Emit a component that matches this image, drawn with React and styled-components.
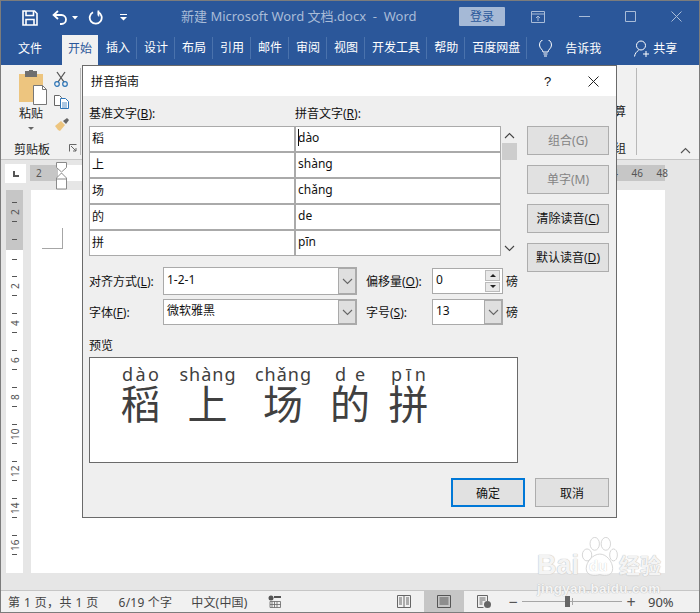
import styled, { createGlobalStyle } from "styled-components";

const GlobalStyle = createGlobalStyle`
  html, body {
    margin: 0;
    padding: 0;
    background: #e6e6e6;
  }
  * {
    box-sizing: border-box;
  }
`;

const FONT = `"Noto Sans", "Noto Sans CJK SC", sans-serif`;

const TABS = ["插入", "设计", "布局", "引用", "邮件", "审阅", "视图", "开发工具", "帮助", "百度网盘"];

const RULER_GROUPS = ["2", "4", "6", "8", "10", "12", "14", "16"];

const READINGS = [
  { base: "稻", reading: "dào" },
  { base: "上", reading: "shàng" },
  { base: "场", reading: "chǎng" },
  { base: "的", reading: "de" },
  { base: "拼", reading: "pīn" },
];

const PREVIEW = [
  { base: "稻", reading: "dào", width: 39, spacing: 2.4 },
  { base: "上", reading: "shàng", width: 56, spacing: 1 },
  { base: "场", reading: "chǎng", width: 56, spacing: 1 },
  { base: "的", reading: "de", width: 39, spacing: 9 },
  { base: "拼", reading: "pīn", width: 39, spacing: 4 },
];

const Chevron = ({ up }) => (
  <svg width="11" height="7" viewBox="0 0 11 7">
    <polyline
      points={up ? "1,6 5.5,1.5 10,6" : "1,1 5.5,5.5 10,1"}
      fill="none"
      stroke="currentColor"
      strokeWidth="1.1"
    />
  </svg>
);

const App = () => (
  <Window>
    <GlobalStyle />
    <TitleBar>
      <TitleIcon $left={21}>
        <svg width="16" height="16" viewBox="0 0 16 16" fill="none" stroke="#fff" strokeWidth="1.6">
          <path d="M1 1h11.5L15 3.5V15H1z" />
          <path d="M4 1v4.5h7.5V1" />
          <path d="M4 15V9.5h8V15" />
        </svg>
      </TitleIcon>
      <TitleIcon $left={14}>
        <svg width="16" height="15" viewBox="0 0 16 15" fill="none" stroke="#fff" strokeWidth="1.8">
          <path d="M6 1 1.6 5 6 9" />
          <path d="M2 5h7.5a4.5 4.5 0 0 1 0 9H8" />
        </svg>
      </TitleIcon>
      <TitleIcon $left={4}>
        <svg width="6" height="4" viewBox="0 0 6 4">
          <path d="M0 0h6L3 3.5z" fill="#fff" />
        </svg>
      </TitleIcon>
      <TitleIcon $left={10}>
        <svg width="15" height="15" viewBox="0 0 15 15" fill="none" stroke="#fff" strokeWidth="1.8">
          <path d="M5 2.3a6 6 0 1 0 5-.2" />
          <path d="M10.4 0.5v5h-0.2" />
        </svg>
      </TitleIcon>
      <TitleIcon $left={17}>
        <svg width="7" height="7" viewBox="0 0 7 7">
          <path d="M0 0h7v1H0zM0 3h7L3.5 6.5z" fill="#fff" />
        </svg>
      </TitleIcon>
      <DocName>{"新建 Microsoft Word 文档.docx  -  Word"}</DocName>
      <LoginButton>登录</LoginButton>
      <WindowIcon $left={26}>
        <svg width="14" height="12" viewBox="0 0 14 12" fill="none" stroke="currentColor">
          <path d="M.5.5h13v11H.5zM.5 3h13M7 10V5M5 7l2-2 2 2" />
        </svg>
      </WindowIcon>
      <WindowIcon $left={34}>
        <svg width="11" height="11" viewBox="0 0 11 11" stroke="currentColor">
          <path d="M0 5.5h11" />
        </svg>
      </WindowIcon>
      <WindowIcon $left={35}>
        <svg width="11" height="11" viewBox="0 0 11 11" fill="none" stroke="currentColor">
          <path d="M.5.5h10v10H.5z" />
        </svg>
      </WindowIcon>
      <WindowIcon $left={35}>
        <svg width="11" height="11" viewBox="0 0 11 11" stroke="currentColor">
          <path d="M.5.5l10 10M10.5.5l-10 10" />
        </svg>
      </WindowIcon>
    </TitleBar>

    <TabBar>
      <FileTab>文件</FileTab>
      <ActiveTab>开始</ActiveTab>
      {TABS.map((tab) => (
        <Tab key={tab}>{tab}</Tab>
      ))}
      <TellIcon>
        <svg width="13" height="17" viewBox="0 0 13 17" fill="none" stroke="#fff" strokeWidth="1">
          <path d="M4 12c0-2.5-3.5-3.5-3.5-7a6 6 0 0 1 12 0c0 3.5-3.5 4.5-3.5 7z" />
          <path d="M4.5 14h4M5 16h3" />
        </svg>
      </TellIcon>
      <TellText>告诉我</TellText>
      <ShareIcon>
        <svg width="16" height="17" viewBox="0 0 16 17" fill="none" stroke="#fff" strokeWidth="1">
          <circle cx="7" cy="5.5" r="4.5" />
          <path d="M.5 16.5c.5-3 2-5 4-6M12 11v6M9 14h6" />
        </svg>
      </ShareIcon>
      <TabText>共享</TabText>
    </TabBar>

    <Ribbon>
      <ClipboardGroup>
        <ClipboardTools>
          <PasteColumn>
            <svg width="30" height="36" viewBox="0 0 30 36">
              <rect x="1" y="4" width="24" height="28" fill="#edc57f" />
              <rect x="7" y="1" width="12" height="6" fill="#6f6f6f" />
              <rect x="11" y="0" width="4" height="3" fill="#6f6f6f" />
              <path d="M15.5 15.5h9l4 4v15h-13z" fill="#fff" stroke="#777" />
              <path d="M24.5 15.5v4h4" fill="none" stroke="#777" />
            </svg>
            <PasteLabel>粘贴</PasteLabel>
            <PasteCaret />
          </PasteColumn>
          <SmallTools>
            <svg width="14" height="16" viewBox="0 0 14 16" fill="none">
              <path d="M3 1l7 10M11 1L4 11" stroke="#555" strokeWidth="1.3" />
              <circle cx="3" cy="13" r="2.3" stroke="#2e75b6" strokeWidth="1.2" />
              <circle cx="11" cy="13" r="2.3" stroke="#2e75b6" strokeWidth="1.2" />
            </svg>
            <svg width="15" height="14" viewBox="0 0 15 14" fill="#fff">
              <path d="M.5.5h5l2 2v8h-7z" stroke="#666" />
              <path d="M6.5 3.5h5l3 3v7h-8z" stroke="#2e75b6" />
              <path d="M8 8h5M8 10h5M8 12h5" stroke="#2e75b6" strokeWidth=".8" />
            </svg>
            <svg width="16" height="14" viewBox="0 0 16 14">
              <path d="M1 9l6-5 4 4-5 6-2-1z" fill="#edc57f" />
              <path d="M9 4l4-3 2 2-3 4z" fill="#666" />
            </svg>
          </SmallTools>
        </ClipboardTools>
        <GroupFooter>
          <GroupLabel>剪贴板</GroupLabel>
          <Launcher>
            <svg width="8" height="8" viewBox="0 0 8 8" fill="none" stroke="#666">
              <path d="M.5 7.5V.5h7M2 2l5 5M7 4v3H4" />
            </svg>
          </Launcher>
        </GroupFooter>
      </ClipboardGroup>
      <RibbonMiddle />
      <ClippedGroup>
        <span>算</span>
        <span>组</span>
      </ClippedGroup>
      <CollapseArea>
        <Chevron up />
      </CollapseArea>
    </Ribbon>

    <RulerRow>
      <RulerCorner>
        <CornerBox>
          <CornerMark />
        </CornerBox>
      </RulerCorner>
      <RulerLeftMargin>2</RulerLeftMargin>
      <RulerBody />
      <RulerRightMargin>
        <span>44</span>
        <span>46</span>
        <span>48</span>
      </RulerRightMargin>
      <IndentMarker>
        <svg width="11" height="28" viewBox="0 0 11 28" fill="#fff" stroke="#8a8a8a">
          <path d="M.5.5h10v5L5.5 10 .5 5.5z" />
          <path d="M5.5 11l5 5v11H.5V16z" />
          <path d="M.5 17h10" />
        </svg>
      </IndentMarker>
    </RulerRow>

    <Workspace>
      <VerticalRuler>
        <RulerMarginZone>
          <RulerGroup>
            <RulerTick />
            <RulerNumber>2</RulerNumber>
            <RulerTick />
          </RulerGroup>
          <RulerTick />
        </RulerMarginZone>
        <RulerTextZone>
          <RulerTick />
          <RulerGroups>
            {RULER_GROUPS.map((n) => (
              <RulerGroup key={n}>
                <RulerTick />
                <RulerNumber>{n}</RulerNumber>
                <RulerTick />
              </RulerGroup>
            ))}
          </RulerGroups>
        </RulerTextZone>
      </VerticalRuler>
      <Page>
        <CropMark />
      </Page>
    </Workspace>

    <PageGutter />

    <StatusBar>
      <StatusText $left={7} $wide>第 1 页，共 1 页</StatusText>
      <StatusText $left={20}>6/19 个字</StatusText>
      <StatusText $left={19}>中文(中国)</StatusText>
      <StatusIcon $left={20}>
        <svg width="13" height="13" viewBox="0 0 13 13">
          <circle cx="3" cy="3" r="2.5" fill="#555" />
          <path d="M6 1h7v2H6z" fill="#555" />
          <path d="M2 6.5h10.5v6H2zM4 6.5v6M6.5 6.5v6M9 6.5v6M2 9.5h10.5" fill="none" stroke="#666" strokeWidth=".8" />
        </svg>
      </StatusIcon>
      <ViewButtons>
        <ViewButton>
          <svg width="14" height="13" viewBox="0 0 14 13" fill="none" stroke="#666">
            <path d="M.5.5h13v12H.5zM7 .5v12M2 3h3M2 5h3M2 7h3M2 9h3M9 3h3M9 5h3M9 7h3M9 9h3" />
          </svg>
        </ViewButton>
        <ViewButton $active>
          <svg width="14" height="13" viewBox="0 0 14 13" fill="none" stroke="#555">
            <path d="M.5.5h13v12H.5zM2.5 3h9M2.5 5h9M2.5 7h9M2.5 9h9" />
          </svg>
        </ViewButton>
        <ViewButton>
          <svg width="14" height="13" viewBox="0 0 14 13" fill="none" stroke="#666">
            <path d="M10.5 6V.5H.5v12h6M2.5 3h6M2.5 5h6M2.5 7h3M2.5 9h3" />
            <circle cx="10.5" cy="9.5" r="3.5" fill="#666" stroke="none" />
          </svg>
        </ViewButton>
      </ViewButtons>
      <ZoomSlider>
        <ZoomSign>−</ZoomSign>
        <ZoomTrack>
          <ZoomCenter />
          <ZoomThumb />
        </ZoomTrack>
        <ZoomSign>+</ZoomSign>
      </ZoomSlider>
      <ZoomValue>90%</ZoomValue>
    </StatusBar>

    <Dialog>
      <DialogHeader>
        <DialogTitle>拼音指南</DialogTitle>
        <HelpMark>?</HelpMark>
        <CloseMark>
          <svg width="11" height="11" viewBox="0 0 11 11" stroke="#222" strokeWidth="1">
            <path d="M.5.5l10 10M10.5.5l-10 10" />
          </svg>
        </CloseMark>
      </DialogHeader>
      <DialogBody>
        <GuideSection>
          <GuideMain>
            <ColumnLabels>
              <span>
                基准文字(<u>B</u>):
              </span>
              <span>
                拼音文字(<u>R</u>):
              </span>
            </ColumnLabels>
            <TableWrap>
              <ReadingTable>
                {READINGS.map((row, index) => (
                  <ReadingRow key={row.base}>
                    <ReadingCell>{row.base}</ReadingCell>
                    <ReadingCell>
                      {index === 0 && <Caret />}
                      {row.reading}
                    </ReadingCell>
                  </ReadingRow>
                ))}
              </ReadingTable>
              <TableScroll>
                <ScrollArrow>
                  <Chevron up />
                </ScrollArrow>
                <ScrollThumb />
                <ScrollArrow $bottom>
                  <Chevron />
                </ScrollArrow>
              </TableScroll>
            </TableWrap>
          </GuideMain>
          <ActionColumn>
            <ActionButton disabled>组合(G)</ActionButton>
            <ActionButton disabled>单字(M)</ActionButton>
            <ActionButton>
              清除读音(<u>C</u>)
            </ActionButton>
            <ActionButton>
              默认读音(<u>D</u>)
            </ActionButton>
          </ActionColumn>
        </GuideSection>

        <OptionsGrid>
          <OptionLabel>
            对齐方式(<u>L</u>):
          </OptionLabel>
          <Combo $tall>
            <ComboValue $tall>1-2-1</ComboValue>
            <ComboArrow>
              <Chevron />
            </ComboArrow>
          </Combo>
          <OptionLabel $side>
            偏移量(<u>O</u>):
          </OptionLabel>
          <Spin>
            <ComboValue>0</ComboValue>
            <SpinButtons>
              <SpinButton>
                <SpinTriangle $up />
              </SpinButton>
              <SpinButton>
                <SpinTriangle />
              </SpinButton>
            </SpinButtons>
          </Spin>
          <UnitLabel>磅</UnitLabel>

          <OptionLabel>
            字体(<u>F</u>):
          </OptionLabel>
          <Combo>
            <ComboValue>微软雅黑</ComboValue>
            <ComboArrow>
              <Chevron />
            </ComboArrow>
          </Combo>
          <OptionLabel $side>
            字号(<u>S</u>):
          </OptionLabel>
          <Spin>
            <ComboValue>13</ComboValue>
            <ComboArrow>
              <Chevron />
            </ComboArrow>
          </Spin>
          <UnitLabel>磅</UnitLabel>
        </OptionsGrid>

        <PreviewLabel>预览</PreviewLabel>
        <PreviewBox>
          {PREVIEW.map((item) => (
            <PreviewItem key={item.base} $width={item.width}>
              <PreviewReading $spacing={item.spacing}>{item.reading}</PreviewReading>
              <PreviewBase>{item.base}</PreviewBase>
            </PreviewItem>
          ))}
        </PreviewBox>

        <DialogFooter>
          <FooterButton $primary>确定</FooterButton>
          <FooterButton>取消</FooterButton>
        </DialogFooter>
      </DialogBody>
    </Dialog>

    <Watermark>
      <WatermarkLogo>
        <WatermarkWord>Bai</WatermarkWord>
        <PawMark>
          <svg width="38" height="41" viewBox="0 0 44 48" fill="rgba(255,255,255,.75)" stroke="#cfcfcf">
            <ellipse cx="8" cy="21" rx="5.5" ry="7" />
            <ellipse cx="17" cy="8" rx="5.5" ry="7.5" />
            <ellipse cx="30" cy="8" rx="5.5" ry="7.5" />
            <ellipse cx="39" cy="21" rx="4.5" ry="7" />
            <path d="M23 20c8 0 15 9 15 17 0 8-8 9-15 7-7 2-16 1-16-7 0-8 8-17 16-17z" />
          </svg>
          <PawLabel>du</PawLabel>
        </PawMark>
        <WatermarkCjk>经验</WatermarkCjk>
      </WatermarkLogo>
      <WatermarkUrl>jingyan.baidu.com</WatermarkUrl>
    </Watermark>
  </Window>
);

export default App;

const Window = styled.div`
  position: relative;
  width: 700px;
  height: 613px;
  overflow: hidden;
  display: flex;
  flex-direction: column;
  border: 1px solid #7c7c7c;
  background: #e6e6e6;
  font-family: ${FONT};
  font-size: 12px;
  color: #222;
`;

const TitleBar = styled.div`
  height: 33px;
  flex: none;
  display: flex;
  align-items: center;
  background: #2b579a;
`;

const TitleIcon = styled.span`
  display: flex;
  margin-left: ${(p) => p.$left}px;
`;

const DocName = styled.span`
  margin: 0 0 5px 54px;
  width: 278px;
  font-size: 13px;
  white-space: pre;
  color: #a9bcd8;
`;

const LoginButton = styled.span`
  width: 46px;
  height: 19px;
  margin-bottom: 2px;
  display: flex;
  align-items: center;
  justify-content: center;
  padding-bottom: 1px;
  border-radius: 1px;
  background: #a5b9d6;
  color: #2b579a;
  font-size: 12px;
`;

const WindowIcon = styled.span`
  display: flex;
  margin-left: ${(p) => p.$left}px;
  margin-bottom: 2px;
  color: #a9bcd8;
`;

const TabBar = styled.div`
  height: 31px;
  flex: none;
  display: flex;
  align-items: center;
  padding: 0 0 3px 11px;
  background: #2b579a;
  color: #fff;
`;

const FileTab = styled.span`
  width: 36px;
  padding-left: 6px;
  margin-right: 14px;
`;

const ActiveTab = styled.span`
  align-self: stretch;
  width: 36px;
  margin: 1px 1px -3px 0;
  display: flex;
  align-items: center;
  justify-content: center;
  padding-bottom: 4px;
  background: #f1f1f1;
  color: #2b579a;
`;

const Tab = styled.span`
  height: 22px;
  line-height: 21px;
  padding: 0 6px 0 7px;
  border-right: 1px solid #4a72ac;
`;

const TellIcon = styled.span`
  display: flex;
  margin-left: 12px;
`;

const TellText = styled.span`
  margin-left: 13px;
`;

const ShareIcon = styled.span`
  display: flex;
  margin-left: 33px;
  margin-right: 3px;
`;

const TabText = styled.span``;

const Ribbon = styled.div`
  height: 95px;
  flex: none;
  display: flex;
  padding: 3px 0 4px;
  border-bottom: 1px solid #c6c6c6;
  background: #f1f1f1;
`;

const ClipboardGroup = styled.div`
  width: 80px;
  display: flex;
  flex-direction: column;
  border-right: 1px solid #b8b8b8;
`;

const ClipboardTools = styled.div`
  flex: 1;
  display: flex;
  padding: 2px 0 0 17px;
`;

const PasteColumn = styled.div`
  width: 36px;
  display: flex;
  flex-direction: column;
  align-items: flex-start;
`;

const PasteLabel = styled.span`
  width: 26px;
  margin-top: -1px;
  line-height: 17px;
  text-align: center;
`;

const PasteCaret = styled.i`
  margin: 5px 0 0 10px;
  border: 3px solid transparent;
  border-top: 3.5px solid #666;
  border-bottom: 0;
`;

const SmallTools = styled.div`
  display: flex;
  flex-direction: column;
  gap: 8px;
  align-items: flex-start;
  padding-top: 1px;
`;

const GroupFooter = styled.div`
  height: 22px;
  margin-bottom: -3px;
  display: flex;
  align-items: flex-end;
  padding-left: 13px;
`;

const GroupLabel = styled.span`
  flex: 1;
  line-height: 16px;
`;

const Launcher = styled.span`
  display: flex;
  margin: 0 3px 6px 0;
`;

const RibbonMiddle = styled.div`
  flex: 1;
`;

const ClippedGroup = styled.div`
  width: 23px;
  display: flex;
  flex-direction: column;
  gap: 19px;
  padding-top: 34px;
  border-right: 1px solid #b8b8b8;
`;

const CollapseArea = styled.div`
  width: 62px;
  display: flex;
  align-items: flex-end;
  justify-content: flex-end;
  padding: 0 8px 1px 0;
  color: #555;
`;

const RulerRow = styled.div`
  position: relative;
  height: 30px;
  flex: none;
  display: flex;
  align-items: flex-start;
  background: #e6e6e6;
`;

const RulerCorner = styled.div`
  width: 29px;
  height: 26px;
  padding: 4px 0 0 4px;
`;

const CornerBox = styled.div`
  width: 21px;
  height: 19px;
  display: flex;
  align-items: center;
  justify-content: center;
  background: #fff;
`;

const CornerMark = styled.i`
  width: 6px;
  height: 6px;
  border-left: 2px solid #555;
  border-bottom: 2px solid #555;
`;

const RulerLeftMargin = styled.div`
  width: 28px;
  height: 16px;
  margin-top: 5px;
  padding-left: 6px;
  line-height: 16px;
  font-size: 10px;
  color: #555;
  background: #c6c6c6;
`;

const RulerBody = styled.div`
  flex: 1;
  height: 16px;
  margin-top: 5px;
  background: #fff;
`;

const RulerRightMargin = styled.div`
  width: 70px;
  height: 16px;
  margin: 5px 34px 0 0;
  display: flex;
  justify-content: flex-end;
  gap: 13.6px;
  line-height: 16px;
  font-size: 10px;
  color: #555;
  background: #c6c6c6;

  span:last-child {
    margin-right: -3px;
  }
`;

const IndentMarker = styled.div`
  position: absolute;
  left: 55px;
  top: 2px;
  display: flex;
`;

const Workspace = styled.div`
  height: 383px;
  flex: none;
  display: flex;
  padding-left: 5px;
`;

const VerticalRuler = styled.div`
  width: 17px;
  overflow: hidden;
  margin-right: 8px;
  display: flex;
  flex-direction: column;
  background: #fff;
`;

const RulerMarginZone = styled.div`
  height: 60px;
  flex: none;
  display: flex;
  flex-direction: column;
  align-items: center;
  padding-top: 12px;
  background: #c6c6c6;
`;

const RulerTextZone = styled.div`
  display: flex;
  flex-direction: column;
  align-items: center;
  padding-top: 9px;
`;

const RulerGroups = styled.div`
  margin-top: 16px;
`;

const RulerGroup = styled.div`
  height: 37px;
  display: flex;
  flex-direction: column;
  align-items: center;
`;

const RulerTick = styled.i`
  width: 5px;
  height: 1px;
  flex: none;
  background: #555;
`;

const RulerNumber = styled.span`
  height: 18px;
  display: flex;
  align-items: center;
  justify-content: center;
  writing-mode: vertical-rl;
  transform: rotate(180deg);
  font-size: 10px;
  line-height: 10px;
  color: #555;
`;

const Page = styled.div`
  width: 634px;
  padding: 38px 0 0 11px;
  background: #fff;
`;

const CropMark = styled.div`
  width: 21px;
  height: 21px;
  border-right: 1px solid #a6a6a6;
  border-bottom: 1px solid #a6a6a6;
`;

const PageGutter = styled.div`
  height: 17px;
  flex: none;
`;

const StatusBar = styled.div`
  height: 22px;
  flex: none;
  display: flex;
  align-items: center;
  border-top: 1px solid #c6c6c6;
  background: #f1f1f1;
  color: #444;
`;

const StatusText = styled.span`
  margin-left: ${(p) => p.$left}px;
  letter-spacing: ${(p) => (p.$wide ? "0.4px" : "0.2px")};
`;

const StatusIcon = styled.span`
  display: flex;
  margin-left: ${(p) => p.$left}px;
`;

const ViewButtons = styled.div`
  align-self: stretch;
  margin-left: auto;
  display: flex;
`;

const ViewButton = styled.span`
  width: 40px;
  display: flex;
  align-items: center;
  justify-content: center;
  background: ${(p) => (p.$active ? "#c6c6c6" : "transparent")};
`;

const ZoomSlider = styled.div`
  display: flex;
  align-items: center;
  margin-left: 1px;
`;

const ZoomSign = styled.span`
  width: 16px;
  text-align: center;
  font-size: 16px;
  line-height: 16px;
  color: #555;
`;

const ZoomTrack = styled.div`
  position: relative;
  width: 100px;
  height: 1px;
  margin: 0 1px;
  background: #a6a6a6;
`;

const ZoomCenter = styled.i`
  position: absolute;
  left: 50px;
  top: -3px;
  width: 1px;
  height: 7px;
  background: #a6a6a6;
`;

const ZoomThumb = styled.i`
  position: absolute;
  left: 43px;
  top: -5px;
  width: 5px;
  height: 11px;
  background: #666;
`;

const ZoomValue = styled.span`
  width: 60px;
  padding-left: 9px;
  font-size: 13px;
`;

const Dialog = styled.div`
  position: absolute;
  left: 81px;
  top: 64px;
  width: 535px;
  height: 453px;
  display: flex;
  flex-direction: column;
  border: 1px solid #6a6a6a;
  background: #efefef;
  color: #111;
`;

const DialogHeader = styled.div`
  height: 30px;
  flex: none;
  display: flex;
  align-items: center;
  padding-left: 8px;
  background: #fff;
`;

const DialogTitle = styled.span`
  flex: 1;
`;

const HelpMark = styled.span`
  width: 48px;
  padding-left: 4px;
  font-size: 13px;
  font-family: "Liberation Sans", sans-serif;
`;

const CloseMark = styled.span`
  display: flex;
  width: 28px;
`;

const DialogBody = styled.div`
  flex: 1;
  display: flex;
  flex-direction: column;
  padding: 10px 7px 0 6px;
`;

const GuideSection = styled.div`
  display: flex;
  justify-content: space-between;
`;

const GuideMain = styled.div`
  width: 428px;
`;

const ColumnLabels = styled.div`
  height: 20px;
  display: grid;
  grid-template-columns: 206px 206px;
  line-height: 16px;
`;

const TableWrap = styled.div`
  display: flex;
`;

const ReadingTable = styled.div`
  width: 412px;
  display: flex;
  flex-direction: column;
`;

const ReadingRow = styled.div`
  height: 26px;
  display: grid;
  grid-template-columns: 206px 206px;
`;

const ReadingCell = styled.div`
  position: relative;
  display: flex;
  align-items: center;
  padding: 0 0 3px 2px;
  border: 1px solid #aaa;
  background: #fff;
  font-size: 12px;
`;

const Caret = styled.i`
  position: absolute;
  left: 2px;
  top: 2px;
  width: 1px;
  height: 17px;
  background: #111;
`;

const TableScroll = styled.div`
  position: relative;
  width: 16px;
  display: flex;
  flex-direction: column;
  align-items: center;
`;

const ScrollArrow = styled.span`
  display: flex;
  position: absolute;
  ${(p) => (p.$bottom ? "bottom: 4px;" : "top: 6px;")}
  color: #444;
`;

const ScrollThumb = styled.div`
  position: absolute;
  top: 17px;
  left: 1px;
  width: 15px;
  height: 17px;
  background: #cdcdcd;
`;

const ActionColumn = styled.div`
  width: 82px;
  display: flex;
  flex-direction: column;
  gap: 10px;
  padding-top: 20px;
`;

const ActionButton = styled.button`
  height: 29px;
  padding: 0 0 2px;
  border: 1px solid #adadad;
  background: #e1e1e1;
  font-family: inherit;
  font-size: 12px;
  color: #111;

  &:disabled {
    color: #848484;
  }
`;

const OptionsGrid = styled.div`
  margin-top: -5px;
  display: grid;
  grid-template-columns: 74px 194px 75px 71px auto;
  grid-template-rows: 28px 26px;
  row-gap: 4px;
  align-items: center;
`;

const OptionLabel = styled.span`
  padding-left: ${(p) => (p.$side ? "9px" : "0")};
`;

const Combo = styled.div`
  height: ${(p) => (p.$tall ? "28px" : "26px")};
  display: flex;
  border: 1px solid #aaa;
  background: #fff;
`;

const ComboValue = styled.span`
  flex: 1;
  padding-left: 3px;
  line-height: ${(p) => (p.$tall ? "24px" : "22px")};
`;

const ComboArrow = styled.span`
  width: 18px;
  display: flex;
  align-items: center;
  justify-content: center;
  border: 1px solid #aaa;
  background: #dfdfdf;
  color: #666;
`;

const Spin = styled.div`
  height: 26px;
  display: flex;
  border: 1px solid #aaa;
  background: #fff;
`;

const SpinButtons = styled.div`
  width: 15px;
  margin: 1px 2px;
  display: flex;
  flex-direction: column;
  gap: 1px;
`;

const SpinButton = styled.span`
  flex: 1;
  display: flex;
  align-items: center;
  justify-content: center;
  border: 1px solid #bbb;
  background: #e8e8e8;
`;

const SpinTriangle = styled.i`
  border: 3px solid transparent;
  ${(p) => (p.$up ? "border-bottom: 3px solid #222; border-top: 0;" : "border-top: 3px solid #222; border-bottom: 0;")}
`;

const UnitLabel = styled.span`
  padding-left: 3px;
`;

const PreviewLabel = styled.div`
  margin-top: 13px;
  height: 19px;
  line-height: 16px;
`;

const PreviewBox = styled.div`
  width: 429px;
  height: 106px;
  display: flex;
  gap: 19.5px;
  padding: 5px 0 0 31px;
  border: 1px solid #6a6a6a;
  background: #fff;
  color: #404040;
`;

const PreviewItem = styled.div`
  width: ${(p) => p.$width}px;
  height: 60px;
  display: flex;
  flex-direction: column;
  align-items: center;
`;

const PreviewReading = styled.span`
  height: 22px;
  line-height: 22px;
  white-space: nowrap;
  font-size: 18px;
  letter-spacing: ${(p) => p.$spacing}px;
  margin-right: -${(p) => p.$spacing}px;
`;

const PreviewBase = styled.span`
  height: 38px;
  line-height: 38px;
  font-size: 40px;
`;

const DialogFooter = styled.div`
  display: flex;
  justify-content: flex-end;
  gap: 10px;
  margin-top: 15px;
`;

const FooterButton = styled.button`
  width: 74px;
  height: 29px;
  padding: 0;
  border: ${(p) => (p.$primary ? "2px solid #0078d7" : "1px solid #adadad")};
  background: #e1e1e1;
  font-family: inherit;
  font-size: 12px;
  color: #111;
`;

const Watermark = styled.div`
  position: absolute;
  left: 536px;
  top: 536px;
  width: 124px;
  display: flex;
  flex-direction: column;
  pointer-events: none;
`;

const WatermarkLogo = styled.div`
  display: flex;
  align-items: flex-end;
  height: 41px;
`;

const glow = `
  color: rgba(255, 255, 255, 0.85);
  text-shadow: 0 0 1px #bdbdbd, 0 0 1px #bdbdbd;
`;

const WatermarkWord = styled.span`
  ${glow}
  flex: none;
  width: 43px;
  font-family: "Liberation Sans", sans-serif;
  font-weight: 700;
  font-size: 27px;
  line-height: 26px;
`;

const PawMark = styled.span`
  position: relative;
  flex: none;
  display: flex;
`;

const PawLabel = styled.span`
  position: absolute;
  left: 9px;
  bottom: 5px;
  font-family: "Liberation Sans", sans-serif;
  font-weight: 700;
  font-size: 15px;
  line-height: 15px;
  color: #fff;
  text-shadow: 0 0 1px #bdbdbd;
`;

const WatermarkCjk = styled.span`
  ${glow}
  flex: none;
  white-space: nowrap;
  margin-left: 1px;
  font-size: 21px;
  line-height: 26px;
  font-weight: 700;
`;

const WatermarkUrl = styled.span`
  ${glow}
  margin-top: 5px;
  white-space: nowrap;
  font-family: "Liberation Sans", sans-serif;
  font-size: 13.5px;
  line-height: 12px;
  font-weight: 700;
  letter-spacing: 0.3px;
`;
